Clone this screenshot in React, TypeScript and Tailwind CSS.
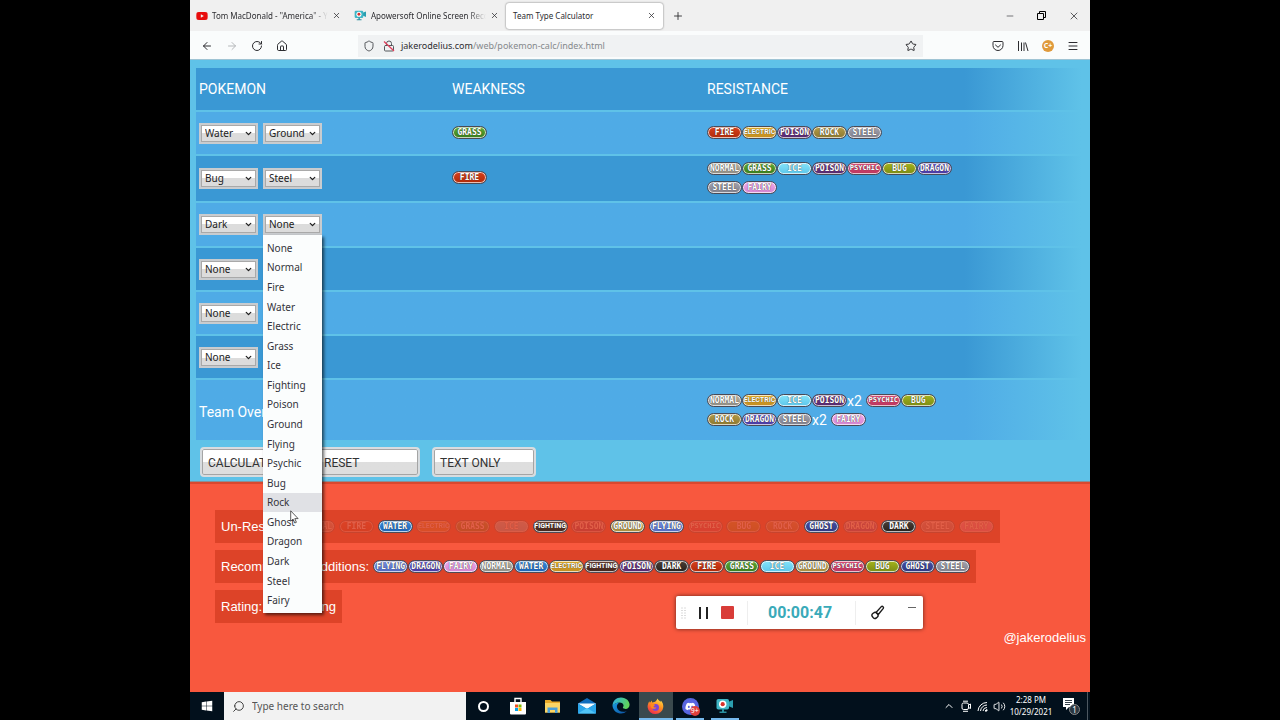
import { useState, type ReactNode } from "react";
import {
  ArrowLeft, ArrowRight, RotateCw, House, Shield, Star, Menu, X, Plus, Minus,
  ChevronDown, ChevronUp, Search, Volume2, Lock,
} from "lucide-react";
import { FaDiscord, FaYoutube, FaWindows } from "react-icons/fa";

const TYPES = [
  "Normal", "Fire", "Water", "Electric", "Grass", "Ice", "Fighting", "Poison", "Ground",
  "Flying", "Psychic", "Bug", "Rock", "Ghost", "Dragon", "Dark", "Steel", "Fairy",
];
const OPTIONS = ["None", ...TYPES];

const BADGE: Record<string, string> = {
  Normal: "from-[#b9b6a8] to-[#8f8c84]",
  Fire: "from-[#d9401c] to-[#b02a08]",
  Water: "from-[#3a8fe0] to-[#1c62b4]",
  Electric: "from-[#e8b428] to-[#c08a20]",
  Grass: "from-[#5fae34] to-[#3a7c1c]",
  Ice: "from-[#84e4fa] to-[#5cc6ea]",
  Fighting: "from-[#6b4030] to-[#44251c]",
  Poison: "from-[#7c3f8c] to-[#54286c]",
  Ground: "from-[#d2b45c] to-[#a88a3c]",
  Flying: "from-[#7c94e4] to-[#5068c0]",
  Psychic: "from-[#e4507c] to-[#b8345c]",
  Bug: "from-[#a4b41c] to-[#7c8c14]",
  Rock: "from-[#b49c48] to-[#8c7830]",
  Ghost: "from-[#4450a8] to-[#303880]",
  Dragon: "from-[#6c5cd0] to-[#4838a0]",
  Dark: "from-[#4c4038] to-[#28201c]",
  Steel: "from-[#a4a4b0] to-[#80808c]",
  Fairy: "from-[#f0a8ec] to-[#d484d0]",
};

function badgeFont(type: string) {
  if (type.length <= 6) return "font-['DejaVu_Sans_Mono',monospace] text-[8px]";
  if (type.length === 7) return "font-['DejaVu_Sans_Mono',monospace] text-[7px]";
  return "font-['Roboto',sans-serif] text-[7px]";
}

function Badge({ type, dim = false }: { type: string; dim?: boolean }) {
  return (
    <span
      className={`flex h-[13px] w-[35px] shrink-0 items-center justify-center rounded-full border border-[#4a4a55] bg-linear-to-b leading-[11px] font-bold text-white uppercase shadow-[inset_0_0_0_1px_rgba(255,255,255,0.7)] [text-shadow:0_0_1px_#222] ${BADGE[type]} ${badgeFont(type)} ${dim ? "opacity-15" : ""}`}
    >
      {type}
    </span>
  );
}

function Picker({ label, initial, children }: { label: string; initial: string; children?: ReactNode }) {
  const [value, setValue] = useState(initial);
  return (
    <div className="relative">
      <select
        aria-label={label}
        value={value}
        onChange={(e) => setValue(e.target.value)}
        className="block h-[21px] w-[59px] appearance-none border-2 border-[#c9cccf] bg-linear-to-b from-white from-50% to-[#dcdcdc] to-50% pl-1 font-['Noto_Sans',sans-serif] text-[10px] leading-[17px] text-[#222] shadow-[inset_0_0_0_1px_#a9a9a9] outline-none"
      >
        {OPTIONS.map((o) => (
          <option key={o}>{o}</option>
        ))}
      </select>
      <ChevronDown className="pointer-events-none absolute top-[6px] right-[5px] size-[9px] text-[#222]" strokeWidth={3.5} />
      {children}
    </div>
  );
}

function TypeMenu() {
  return (
    <ul
      role="listbox"
      aria-label="Types"
      className="absolute top-full left-0 z-20 flex h-[378px] w-[59px] flex-col bg-[#fbfdfd] py-[3px] font-['Noto_Sans',sans-serif] text-[10px] text-[#33333b] shadow-[2px_2px_3px_rgba(0,0,0,0.6)]"
    >
      {OPTIONS.map((m) => (
        <li
          key={m}
          role="option"
          aria-selected={m === "Rock"}
          className={`flex flex-1 items-center pl-1 leading-none ${m === "Rock" ? "bg-[#e0e1e5]" : ""}`}
        >
          {m}
        </li>
      ))}
      <svg className="absolute top-[275px] left-[27px] h-[14px] w-[9px]" viewBox="0 0 9 14" aria-hidden="true">
        <path d="M.7.8v10.400l2.400-2.100 1.700 3.900 1.600-.7-1.600-3.700h3.300z" fill="#fff" stroke="#333" strokeWidth=".8" />
      </svg>
    </ul>
  );
}

type Item = { type: string; times?: number };

function BadgeWrap({ items }: { items: Item[] }) {
  return (
    <div className="flex max-w-[250px] flex-wrap">
      {items.map((i) => (
        <span key={i.type} className="flex h-[19px] items-center">
          <Badge type={i.type} />
          {i.times && <span className="mr-1 leading-none">x{i.times}</span>}
        </span>
      ))}
    </div>
  );
}

const list = (...names: string[]): Item[] => names.map((type) => ({ type }));

const ROWS = [
  { a: "Water", b: "Ground", h: "h-[42px]", weak: list("Grass"), resist: list("Fire", "Electric", "Poison", "Rock", "Steel") },
  { a: "Bug", b: "Steel", h: "h-[45px]", weak: list("Fire"), resist: list("Normal", "Grass", "Ice", "Poison", "Psychic", "Bug", "Dragon", "Steel", "Fairy") },
  { a: "Dark", b: "None", h: "h-[43px]", weak: [], resist: [], open: true },
  { a: "None", b: "None", h: "h-[42px]", weak: [], resist: [] },
  { a: "None", b: "None", h: "h-[42px]", weak: [], resist: [] },
  { a: "None", b: "None", h: "h-[42px]", weak: [], resist: [] },
];

const OVERALL: Item[] = [
  { type: "Normal" }, { type: "Electric" }, { type: "Ice" }, { type: "Poison", times: 2 },
  { type: "Psychic" }, { type: "Bug" }, { type: "Rock" }, { type: "Dragon" },
  { type: "Steel", times: 2 }, { type: "Fairy" },
];

const UNRESISTED = ["Water", "Fighting", "Ground", "Flying", "Ghost", "Dark"];
const ADDITIONS = [
  "Flying", "Dragon", "Fairy", "Normal", "Water", "Electric", "Fighting", "Poison", "Dark",
  "Fire", "Grass", "Ice", "Ground", "Psychic", "Bug", "Ghost", "Steel",
];

const DARK_ROW = "bg-linear-to-r from-[#3a98d4] from-86% to-[#5fc2e8] to-99%";
const LIGHT_ROW = "bg-linear-to-r from-[#4fabe6] from-86% to-[#5fc2e8] to-99%";

function CamIcon({ className }: { className: string }) {
  return (
    <svg className={className} viewBox="0 0 18 16" aria-hidden="true">
      <path d="M12 4l5-2v8l-5-2z" fill="#2b9fb0" />
      <rect x=".5" y="1" width="12.5" height="10.5" rx="1.8" fill="#3fb6c6" />
      <path d="M6 11h2v2.400h2.500V15h-7v-1.600H6z" fill="#2b8fa0" />
      <circle cx="6.700" cy="6.200" r="3.700" fill="#fff" />
      <circle cx="6.700" cy="6.200" r="2.100" fill="#d8322c" />
    </svg>
  );
}

function Tab({ icon, title }: { icon: ReactNode; title: string }) {
  return (
    <div className="flex w-[158px] items-center gap-1 pr-[7px] pl-1.5">
      {icon}
      <span className="min-w-0 flex-1 whitespace-nowrap [mask-image:linear-gradient(to_right,black_85%,transparent)]">{title}</span>
      <button aria-label="Close tab"><X className="size-[9px]" /></button>
    </div>
  );
}

function Browser() {
  return (
    <header className="font-['Noto_Sans',sans-serif] text-[9px] text-[#2c2c30]">
      <div className="flex h-[31px] items-center bg-[#f0f0f0] text-[8px]">
        <Tab icon={<FaYoutube className="size-[12px] text-[#e80c0c]" />} title={'Tom MacDonald - "America" - Y'} />
        <Tab icon={<CamIcon className="h-[11px] w-[13px]" />} title="Apowersoft Online Screen Reco" />
        <div className="flex h-[26px] w-[157px] items-center justify-between rounded-[3px] bg-white px-[7px] shadow-[0_0_2px_rgba(0,0,0,0.6)]">
          <span>Team Type Calculator</span>
          <button aria-label="Close tab"><X className="size-[9px]" /></button>
        </div>
        <button aria-label="New tab" className="ml-[9px]"><Plus className="size-[12px]" strokeWidth={1.800} /></button>
        <div className="mr-[10px] ml-auto flex items-center gap-[22px]">
          <button aria-label="Minimize"><Minus className="size-[10px]" strokeWidth={1.500} /></button>
          <button aria-label="Restore">
            <svg className="size-[9px]" viewBox="0 0 9 9" fill="none" stroke="#000" strokeWidth="1" aria-hidden="true">
              <path d="M.5 2.500h6v6h-6zM2.500 2.500v-2h6v6h-2" />
            </svg>
          </button>
          <button aria-label="Close window"><X className="size-[12px]" strokeWidth={1.500} /></button>
        </div>
      </div>
      <div className="flex h-[29px] items-center border-b border-[#9fc4d4] bg-[#fafcfc] pt-px pr-[11px] pl-[11px]">
        <div className="flex items-center gap-[13px]">
          <button aria-label="Back"><ArrowLeft className="size-[12px]" /></button>
          <button aria-label="Forward"><ArrowRight className="size-[12px] text-[#b5b8ba]" /></button>
          <button aria-label="Reload"><RotateCw className="size-[12px]" /></button>
          <button aria-label="Home"><House className="size-[12px]" /></button>
        </div>
        <div className="ml-[70px] flex h-[22px] min-w-0 flex-1 items-center bg-[#f0f2f3] pr-1.5 pl-[5px]">
          <Shield className="size-[12px] shrink-0 text-[#55585c]" />
          <span className="relative ml-2 shrink-0">
            <Lock className="size-[12px] text-[#55585c]" />
            <svg className="absolute inset-0 size-[12px]" viewBox="0 0 12 12" aria-hidden="true">
              <path d="M1 1.500l10 9.500" stroke="#e0405c" strokeWidth="1.300" />
            </svg>
          </span>
          <a href="#index" className="ml-1.5 flex-1 text-[#85898c]"><span className="text-[#2c2c30]">jakerodelius.com</span>/web/pokemon-calc/index.html</a>
          <button aria-label="Bookmark"><Star className="size-[12px]" /></button>
        </div>
        <div className="ml-[69px] flex items-center gap-[13px]">
          <button aria-label="Pocket">
            <svg className="size-[12px]" viewBox="0 0 12 12" fill="none" stroke="currentColor" aria-hidden="true">
              <path d="M2 1.500h8a1 1 0 0 1 1 1v3a5 5 0 0 1-10 0v-3a1 1 0 0 1 1-1z" />
              <path d="M3.500 5L6 7.300 8.500 5" strokeLinecap="round" />
            </svg>
          </button>
          <button aria-label="Library">
            <svg className="size-[12px]" viewBox="0 0 12 12" fill="none" stroke="currentColor" aria-hidden="true">
              <path d="M1.500 1v10M4.500 2.500V11M7 2.500V11M8.500 2.500L11 11" />
            </svg>
          </button>
          <button aria-label="Extension" className="grid size-[12px] place-items-center rounded-full bg-[#e09a3c] text-[7px] leading-none font-bold text-white">C+</button>
          <button aria-label="Menu"><Menu className="size-[12px]" /></button>
        </div>
      </div>
    </header>
  );
}

function PushButton({ children }: { children: ReactNode }) {
  return (
    <button className="h-[30px] w-[104px] rounded-[4px] border-2 border-[#d8dcdf] bg-linear-to-b from-white from-50% to-[#dedede] to-50% pt-[2px] pl-1.5 text-left text-[12px] text-[#333] shadow-[inset_0_0_0_1px_#a5a5a5]">
      {children}
    </button>
  );
}

function Recorder() {
  return (
    <div className="absolute top-[112px] right-[167px] flex h-[33px] w-[247px] items-center rounded-[2px] bg-white shadow-[0_0_4px_rgba(0,0,0,0.6)]">
      <svg className="ml-[5px] h-[12px] w-[5px] text-[#dcdcdc]" viewBox="0 0 5 12" stroke="currentColor" aria-hidden="true">
        <path d="M0 1h5M0 3.500h5M0 6h5M0 8.500h5M0 11h5" strokeDasharray="2 1" />
      </svg>
      <button aria-label="Pause" className="ml-[13px] flex h-[12px] w-[9px] justify-between">
        <span className="h-full w-[2px] bg-[#222]" />
        <span className="h-full w-[2px] bg-[#222]" />
      </button>
      <button aria-label="Stop" className="ml-[13px] size-[13px] rounded-[1px] bg-[#d93c38]" />
      <time className="ml-[13px] flex h-6 w-[109px] items-center border-x border-[#eeeeee] pl-5 font-['Roboto',sans-serif] text-[16px] font-bold text-[#3aaab9]">00:00:47</time>
      <button aria-label="Draw" className="ml-[14px]">
        <svg className="size-[15px]" viewBox="0 0 15 15" fill="none" stroke="#1c1c1c" strokeWidth="1.400" strokeLinejoin="round" aria-hidden="true">
          <path d="M6 7.500L11.300 1.600c1.200-.9 2.800.5 2 1.800L8.500 9.300z" />
          <rect x="2.200" y="7.600" width="5.600" height="5.600" rx="2.300" transform="rotate(-40 5 10.400)" />
        </svg>
      </button>
      <button aria-label="Collapse" className="mr-[7px] mb-[11px] ml-auto h-px w-[8px] bg-[#666]" />
    </div>
  );
}

function Panel({ label, children }: { label: string; children?: ReactNode }) {
  return (
    <div className="flex h-[33px] w-fit items-center bg-[#dd4328] px-[6px]">
      <span className="whitespace-nowrap">{label}</span>
      {children}
    </div>
  );
}

function TaskIcon({ label, active = false, running = false, children }: { label: string; active?: boolean; running?: boolean; children: ReactNode }) {
  return (
    <button aria-label={label} className={`flex flex-1 flex-col items-center ${active ? "bg-[#3a494d]" : ""}`}>
      <span className="grid flex-1 place-items-center">{children}</span>
      {(active || running) && <span className={`-mt-[2px] h-[2px] bg-[#76b9ed] ${active ? "w-full" : "w-[28px]"}`} />}
    </button>
  );
}

function Taskbar() {
  return (
    <footer className="flex h-[28px] bg-[#02101c] font-['Noto_Sans',sans-serif] text-white">
      <button aria-label="Start" className="grid w-[34px] place-items-center"><FaWindows className="size-[12px]" /></button>
      <label className="flex w-[242px] items-center gap-[7px] bg-[#f2f2f2] pl-[8px] text-[#333]">
        <Search className="size-[13px] shrink-0 -scale-x-100" strokeWidth={1.700} />
        <input aria-label="Search" placeholder="Type here to search" className="w-full min-w-0 bg-transparent text-[10px] outline-none placeholder:text-[#555]" />
      </label>
      <div className="flex w-[276px]">
        <TaskIcon label="Cortana"><span className="size-[11px] rounded-full border-2 border-white" /></TaskIcon>
        <TaskIcon label="Store">
          <svg className="h-[18px] w-[16px]" viewBox="0 0 16 18" aria-hidden="true">
            <path d="M5 5V1.500h6V5" fill="none" stroke="#fff" strokeWidth="1.400" />
            <path d="M0 5h16v11.500a1 1 0 0 1-1 1H1a1 1 0 0 1-1-1z" fill="#fff" />
            <path d="M5 7.500h3v3H5z" fill="#f25022" /><path d="M8.500 7.500h3v3h-3z" fill="#7fba00" />
            <path d="M5 11h3v3H5z" fill="#00a4ef" /><path d="M8.500 11h3v3h-3z" fill="#ffb900" />
          </svg>
        </TaskIcon>
        <TaskIcon label="File Explorer">
          <svg className="h-[15px] w-[17px]" viewBox="0 0 17 15" aria-hidden="true">
            <path d="M1 1h5.500l1.500 1.500h8v11H1z" fill="#e8a928" />
            <path d="M1 4h15v9.500H1z" fill="#fad565" />
            <path d="M3.500 14V8.500h10V14H11v-3H6v3z" fill="#4a9fd8" />
          </svg>
        </TaskIcon>
        <TaskIcon label="Mail">
          <svg className="h-[16px] w-[18px]" viewBox="0 0 18 16" aria-hidden="true">
            <path d="M0 5.500L9 0l9 5.500V15H0z" fill="#0f6cbd" />
            <path d="M0 5.500h18L9 11z" fill="#f4fbff" />
            <path d="M0 5.500L9 11l9-5.500V15.500H0z" fill="#2aa5ea" />
            <path d="M0 15.500L9 10l9 5.500z" fill="#50c4f7" />
          </svg>
        </TaskIcon>
        <TaskIcon label="Edge">
          <svg className="size-[18px]" viewBox="0 0 18 18" aria-hidden="true">
            <defs>
              <linearGradient id="edgeTop" x1="0" y1="0" x2="1" y2=".3"><stop offset="0" stopColor="#2aaee8" /><stop offset="1" stopColor="#5fd45a" /></linearGradient>
              <linearGradient id="edgeBody" x1="0" y1="0" x2="1" y2="1"><stop offset="0" stopColor="#1b9de2" /><stop offset="1" stopColor="#0c4fa0" /></linearGradient>
            </defs>
            <path d="M.5 9C.5 3.500 4.500.4 9 .4c5.400 0 8.600 3.900 8.600 7.300 0 2.700-1.900 4.200-4 4.200-2.600 0-3.300-1-2.300-2.300.8-1.200-.1-4.200-3.500-4.200C4.300 5.400 1.600 7.100.5 9z" fill="url(#edgeTop)" />
            <path d="M.5 9c1-2.300 3.500-3.600 7-3.600-2 1-3 3-2.500 5.200.7 3.200 4.600 5.400 9.800 3.600A8.500 8.500 0 0 1 .5 9z" fill="url(#edgeBody)" />
          </svg>
        </TaskIcon>
        <TaskIcon label="Firefox" active>
          <svg className="size-[17px]" viewBox="0 0 17 17" aria-hidden="true">
            <defs>
              <linearGradient id="fox" x1=".8" y1="0" x2=".3" y2="1"><stop offset="0" stopColor="#ffe44a" /><stop offset=".45" stopColor="#ff9020" /><stop offset="1" stopColor="#f0284c" /></linearGradient>
            </defs>
            <path d="M10.500.4c.5 1.500 2 2.200 3 3.400.4-.4.400-.8.400-1.200 1.700 1.700 2.600 4 2.400 6.400A7.900 7.900 0 0 1 .6 9.200C.5 6.800 1.300 4.800 2.300 3.200l.6 1.600L5 2.500v2c1.500-.2 3-.4 3.700-1.200C9.500 2.300 10 1.500 10.500.4z" fill="url(#fox)" />
            <circle cx="8.600" cy="9.400" r="3.400" fill="#7a45d8" />
            <path d="M3.600 6.500c1.500-.8 3.300-.5 4.700.7-1.200.4-1.800 1-1.800 1.800 1 .7 2 .7 3 .4-.7 1.500-3.400 2-4.900.6-.7-.8-1.100-2-1-3.500z" fill="#ff8a1c" />
          </svg>
        </TaskIcon>
        <TaskIcon label="Discord" running>
          <span className="relative grid size-[17px] place-items-center rounded-full bg-[#5865e0]">
            <FaDiscord className="size-[11px]" />
            <span className="absolute -right-[1px] -bottom-[1px] grid size-[10px] place-items-center rounded-full bg-[#e0403c] text-[7px] leading-none">9+</span>
          </span>
        </TaskIcon>
        <TaskIcon label="Screen Recorder" running><CamIcon className="h-[16px] w-[18px]" /></TaskIcon>
      </div>
      <div className="ml-auto flex items-center gap-[5px]">
        <ChevronUp className="size-[12px]" />
        <svg className="size-[12px]" viewBox="0 0 12 12" fill="none" stroke="#fff" aria-hidden="true">
          <rect x="2" y="3" width="6.500" height="6.500" rx="1.500" /><path d="M8.500 5l2-1v4.500l-2-1M3 1.200h5M3 11.300h5" />
        </svg>
        <svg className="size-[11px]" viewBox="0 0 11 11" fill="none" stroke="#fff" aria-hidden="true">
          <path d="M1 10A9 9 0 0 1 10 1.500M3.500 10A6.500 6.500 0 0 1 10 4M6 10a4 4 0 0 1 4-3.500" /><path d="M8 10h2V8.500z" fill="#fff" />
        </svg>
        <Volume2 className="size-[13px]" strokeWidth={1.700} />
        <div className="flex w-[40px] flex-col items-center text-[8px] leading-[12px] whitespace-nowrap">
          <span>2:28 PM</span>
          <span>10/29/2021</span>
        </div>
        <span className="relative ml-[6px] size-[18px]">
          <svg className="size-[14px]" viewBox="0 0 14 14" aria-hidden="true">
            <path d="M1 1h11v9H7l-3 3v-3H1z" fill="#fff" /><path d="M3 3.500h7M3 5.500h7M3 7.500h5" stroke="#02101c" strokeWidth=".8" />
          </svg>
          <span className="absolute right-0 bottom-0 grid size-[11px] place-items-center rounded-full border border-[#888] bg-[#2a3640] text-[8px] leading-none">1</span>
        </span>
        <span className="ml-[2px] h-[28px] w-[3px] border-l border-[#4c5862]" />
      </div>
    </footer>
  );
}

export default function App() {
  return (
    <div className="min-h-screen bg-black">
      <div className="mx-auto flex min-h-screen max-w-[900px] flex-col">
        <Browser />
        <main className="flex flex-1 flex-col leading-none text-white">
          <section className="border-b border-[#8a8f94] bg-[#5fc2e8] pt-[6px] pb-[4px] pl-[6px] font-['Roboto','Liberation_Sans',sans-serif] text-[14px]">
            <table className="w-full table-fixed border-separate border-spacing-x-0 border-spacing-y-[2px]">
              <colgroup>
                <col className="w-[253px]" />
                <col className="w-[255px]" />
                <col />
              </colgroup>
              <thead>
                <tr className={`h-[42px] ${DARK_ROW}`}>
                  <th className="p-0 pl-[3px] text-left font-normal">POKEMON</th>
                  <th className="p-0 pl-[3px] text-left font-normal">WEAKNESS</th>
                  <th className="p-0 pl-[3px] text-left font-normal">RESISTANCE</th>
                </tr>
              </thead>
              <tbody>
                {ROWS.map((r, i) => (
                  <tr key={i} className={`${r.h} ${i % 2 ? DARK_ROW : LIGHT_ROW}`}>
                    <td className="p-0 pl-[3px]">
                      <div className="flex gap-[5px]">
                        <Picker label={`Pokemon ${i + 1} first type`} initial={r.a} />
                        <Picker label={`Pokemon ${i + 1} second type`} initial={r.b}>
                          {r.open && <TypeMenu />}
                        </Picker>
                      </div>
                    </td>
                    <td className="p-0 pb-[2px] pl-[3px]"><BadgeWrap items={r.weak} /></td>
                    <td className="p-0 pb-[2px] pl-[3px]"><BadgeWrap items={r.resist} /></td>
                  </tr>
                ))}
                <tr className={`h-[60px] ${LIGHT_ROW}`}>
                  <td className="p-0 pt-[3px] pl-[3px]">Team Overall</td>
                  <td className="p-0" />
                  <td className="p-0 pl-[3px]"><BadgeWrap items={OVERALL} /></td>
                </tr>
              </tbody>
            </table>
            <div className="mt-[5px] flex gap-3 pl-1">
              <PushButton>CALCULATE</PushButton>
              <PushButton>RESET</PushButton>
              <PushButton>TEXT ONLY</PushButton>
            </div>
          </section>
          <section className="relative flex flex-1 flex-col gap-[7px] border-t-2 border-[#d9482f] bg-[#f8583e] pt-[26px] pl-[25px] font-['Liberation_Sans',Arial,sans-serif] text-[13px]">
            <Panel label="Un-Resisted:">
              <div className="ml-1 flex w-[694px] justify-between">
                {TYPES.map((t) => <Badge key={t} type={t} dim={!UNRESISTED.includes(t)} />)}
              </div>
            </Panel>
            <Panel label="Recommended Additions:">
              <div className="ml-1 flex w-[597px] justify-between">
                {ADDITIONS.map((t) => <Badge key={t} type={t} />)}
              </div>
            </Panel>
            <Panel label="Rating: Outstanding" />
            <a href="#author" className="mt-px mr-1 self-end">@jakerodelius</a>
            <Recorder />
          </section>
        </main>
        <Taskbar />
      </div>
    </div>
  );
}
